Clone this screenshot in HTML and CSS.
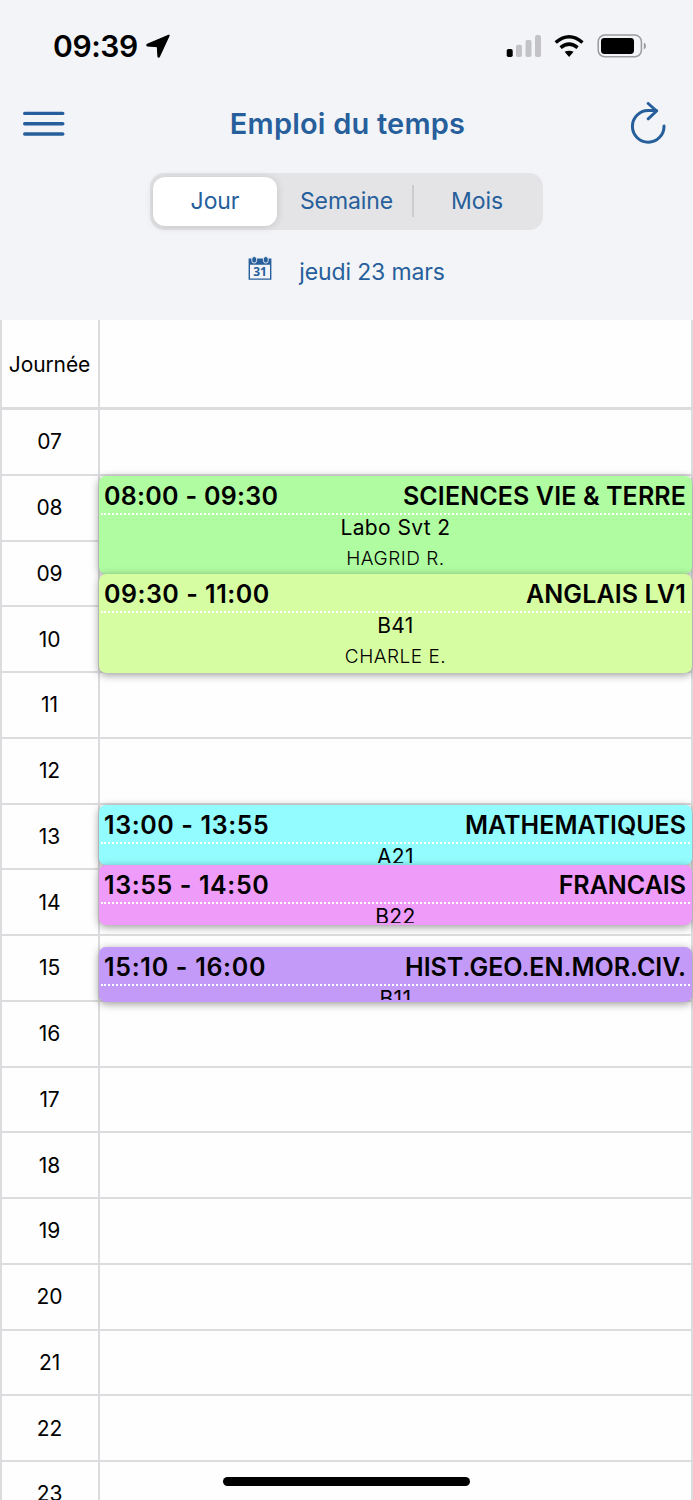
FILE: index.html
```html
<!DOCTYPE html>
<html lang="fr">
<head>
<meta charset="utf-8">
<title>Emploi du temps</title>
<link rel="stylesheet" href="styles.css">
</head>
<body>
<div class="screen">
  <header class="header">
    <div class="status">
      <div class="status-left">
        <span class="clock">09:39</span>
        <svg class="location" width="24" height="24" viewBox="0 0 24 24"><path d="M22.6 1.2 1.4 10.2Q.2 11.2 1.6 12L11.4 12.6 12 22.2Q12.5 23.8 13.4 22.4L22.9 2Q23.4.7 22.6 1.2Z" stroke="#000" stroke-width="1.2" stroke-linejoin="round"/></svg>
      </div>
      <svg class="status-icons" width="142" height="26" viewBox="0 0 142 26">
        <g fill="#c3c3c5"><rect x="10" y="10.8" width="6" height="12.3" rx="1.8"/><rect x="19.5" y="6" width="6" height="17.1" rx="1.8"/><rect x="29" y="1.1" width="6" height="22" rx="1.8"/></g>
        <rect x=".7" y="15" width="6" height="8.1" rx="1.8"/>
        <path d="M58.6 17.8Q63.1 15.6 67.6 17.8L63.1 23Z"/>
        <g fill="none" stroke="#000" stroke-width="3.5"><path d="M49.7 8.5Q63.1-2.9 76.5 8.5"/><path d="M54.6 13.6Q63.1 6.6 71.6 13.6"/></g>
        <rect x="92.2" y="1" width="43.2" height="21.8" rx="6.6" fill="none" stroke="#9b9b9d" stroke-width="1.5"/>
        <rect x="95" y="4" width="33" height="16" rx="3.4"/>
        <path d="M137.8 8.4Q140 9.3 140 12T137.8 15.6Z" fill="#9b9b9d"/>
      </svg>
    </div>
    <nav class="navbar">
      <svg class="menu" width="42" height="26" viewBox="0 0 42 26" stroke="#265f9b" stroke-width="3.4" stroke-linecap="round"><path d="M1.7 2.4H39.8M1.7 12.7H39.8M1.7 23H39.8"/></svg>
      <h1 class="title">Emploi du temps</h1>
      <svg class="reload" width="36" height="44" viewBox="0 0 36 44" fill="none" stroke="#265f9b" stroke-width="3" stroke-linecap="round" stroke-linejoin="round"><path d="M34 24A15.8 15.8 0 1 1 18.2 8.6H26.6M18.2 1.5 26.6 9 18.2 16.8"/></svg>
    </nav>
    <div class="segments">
      <span class="segment active">Jour</span>
      <span class="segment week">Semaine</span>
      <span class="segment">Mois</span>
    </div>
    <div class="date">
      <svg width="24" height="26" viewBox="0 0 24 26"><path fill="#265f9b" d="M.6 2.6H23.4V23.8H.6ZM2 8.8V22.4H22V8.8Z" fill-rule="evenodd"/><g fill="#265f9b" stroke="#f3f4f7" stroke-width=".9"><rect x="3.8" y=".5" width="4.8" height="6.6" rx="2.4"/><rect x="15.4" y=".5" width="4.8" height="6.6" rx="2.4"/></g><text class="icon-day" x="12" y="19.8" text-anchor="middle">31</text></svg>
      <span class="date-text">jeudi 23 mars</span>
    </div>
  </header>
  <main class="agenda">
    <div class="row allday"><div class="hour">Journée</div><div class="slot"></div></div>
    <div class="row"><div class="hour">07</div><div class="slot"></div></div>
    <div class="row"><div class="hour">08</div><div class="slot"></div></div>
    <div class="row"><div class="hour">09</div><div class="slot"></div></div>
    <div class="row"><div class="hour">10</div><div class="slot"></div></div>
    <div class="row"><div class="hour">11</div><div class="slot"></div></div>
    <div class="row"><div class="hour">12</div><div class="slot"></div></div>
    <div class="row"><div class="hour">13</div><div class="slot"></div></div>
    <div class="row"><div class="hour">14</div><div class="slot"></div></div>
    <div class="row"><div class="hour">15</div><div class="slot"></div></div>
    <div class="row"><div class="hour">16</div><div class="slot"></div></div>
    <div class="row"><div class="hour">17</div><div class="slot"></div></div>
    <div class="row"><div class="hour">18</div><div class="slot"></div></div>
    <div class="row"><div class="hour">19</div><div class="slot"></div></div>
    <div class="row"><div class="hour">20</div><div class="slot"></div></div>
    <div class="row"><div class="hour">21</div><div class="slot"></div></div>
    <div class="row"><div class="hour">22</div><div class="slot"></div></div>
    <div class="row"><div class="hour">23</div><div class="slot"></div></div>

    <article class="event science">
      <div class="event-head"><span class="time">08:00 - 09:30</span><span class="subject">SCIENCES VIE &amp; TERRE</span></div>
      <div class="event-body"><div class="room">Labo Svt 2</div><div class="teacher">HAGRID R.</div></div>
    </article>
    <article class="event english">
      <div class="event-head"><span class="time">09:30 - 11:00</span><span class="subject">ANGLAIS LV1</span></div>
      <div class="event-body"><div class="room">B41</div><div class="teacher">CHARLE E.</div></div>
    </article>
    <article class="event maths">
      <div class="event-head"><span class="time">13:00 - 13:55</span><span class="subject">MATHEMATIQUES</span></div>
      <div class="event-body"><div class="room">A21</div></div>
    </article>
    <article class="event french">
      <div class="event-head"><span class="time">13:55 - 14:50</span><span class="subject">FRANCAIS</span></div>
      <div class="event-body"><div class="room">B22</div></div>
    </article>
    <article class="event history">
      <div class="event-head"><span class="time">15:10 - 16:00</span><span class="subject">HIST.GEO.EN.MOR.CIV.</span></div>
      <div class="event-body"><div class="room">B11</div></div>
    </article>
  </main>
  <div class="home-bar"></div>
</div>
</body>
</html>
```
FILE: styles.css
```css
* { box-sizing: border-box; }
body { margin: 0; background: #fff; }
.screen {
  position: relative;
  width: 693px;
  height: 1500px;
  overflow: hidden;
  font-family: Inter, "Liberation Sans", sans-serif;
  color: #000;
}
svg { display: block; flex: none; }

.header { height: 320px; background: #f3f4f7; color: #265f9b; }
.status {
  display: flex;
  justify-content: space-between;
  align-items: flex-start;
  height: 98px;
  padding: 34px 45px 0 53px;
  color: #000;
}
.status-left { display: flex; gap: 8px; }
.clock { font-size: 30px; font-weight: 600; line-height: 25px; letter-spacing: -.4px; }
.navbar {
  display: flex;
  justify-content: space-between;
  align-items: center;
  height: 52px;
  padding: 0 27px 0 23px;
}
.title { margin: 0 0 1px; font-size: 29px; font-weight: 600; line-height: 40px; letter-spacing: .2px; }

.segments {
  display: grid;
  grid-template-columns: 124px 1fr 126px;
  width: 393px;
  height: 57px;
  margin: 22.5px auto 0;
  padding: 4px 3px;
  border-radius: 14px;
  background: #e4e4e6;
}
.segment {
  display: flex;
  align-items: center;
  justify-content: center;
  font-size: 23px;
  line-height: 30px;
  letter-spacing: -.1px;
}
.active {
  border-radius: 12px;
  background: #fff;
  box-shadow: 0 1px 8px rgba(0, 0, 0, .14);
}
.week {
  padding-left: 2px;
  background: linear-gradient(#cbccd0, #cbccd0) right center / 2px 32px no-repeat;
}
.date { display: flex; justify-content: center; gap: 27px; margin-top: 26px; }
.icon-day { font: 700 12px "Open Sans", sans-serif; fill: #265f9b; }
.date-text { font-size: 23px; line-height: 32px; letter-spacing: -.15px; }

.agenda {
  position: relative;
  height: 1180px;
  border-left: 2px solid #dcdcde;
  border-right: 2px solid #dcdcde;
  background: #fefefe;
}
.row {
  display: grid;
  grid-template-columns: 98px 1fr;
  height: 65.75px;
  border-bottom: 2px solid #dcdcde;
}
.allday { height: 90px; border-bottom-width: 3px; }
.hour {
  display: flex;
  align-items: center;
  justify-content: center;
  padding-right: 1px;
  border-right: 2px solid #dcdcde;
  font-size: 21px;
  letter-spacing: -.1px;
}
.allday .hour { padding-top: 2px; }

.event {
  position: absolute;
  left: 97px;
  width: 593px;
  display: flex;
  flex-direction: column;
  padding: 0 2px 2px;
  border-radius: 7px;
  box-shadow: 0 2px 8px rgba(0, 0, 0, .4);
}
.science { top: 155.5px; height: 98.5px; background: #b0fca1; }
.english { top: 254px; height: 99px; background: #d7fda2; }
.maths { top: 484.5px; height: 60.5px; background: #93fcff; }
.french { top: 545px; height: 60px; background: #ef9bf9; }
.history { top: 627px; height: 55px; background: #c49af9; }
.event-head {
  display: flex;
  flex: none;
  justify-content: space-between;
  height: 39px;
  padding: 4px 4px 0 3px;
  border-bottom: 2px dotted #fff;
  font-size: 25px;
  font-weight: 600;
  line-height: 32px;
  white-space: nowrap;
}
.science .time { letter-spacing: .28px; }
.english .time { letter-spacing: .5px; }
.maths .time, .french .time { letter-spacing: .6px; }
.history .time { letter-spacing: .7px; }
.science .subject, .english .subject { letter-spacing: .12px; }
.event-body { flex: 1; min-height: 0; overflow: hidden; text-align: center; }
.room { font-size: 21px; line-height: 26px; letter-spacing: .4px; }
.teacher { margin-top: 4px; font-size: 19px; font-weight: 300; line-height: 28px; letter-spacing: .5px; }

.home-bar {
  position: absolute;
  left: 223px;
  top: 1477px;
  width: 247px;
  height: 9px;
  border-radius: 5px;
  background: #000;
}
```
